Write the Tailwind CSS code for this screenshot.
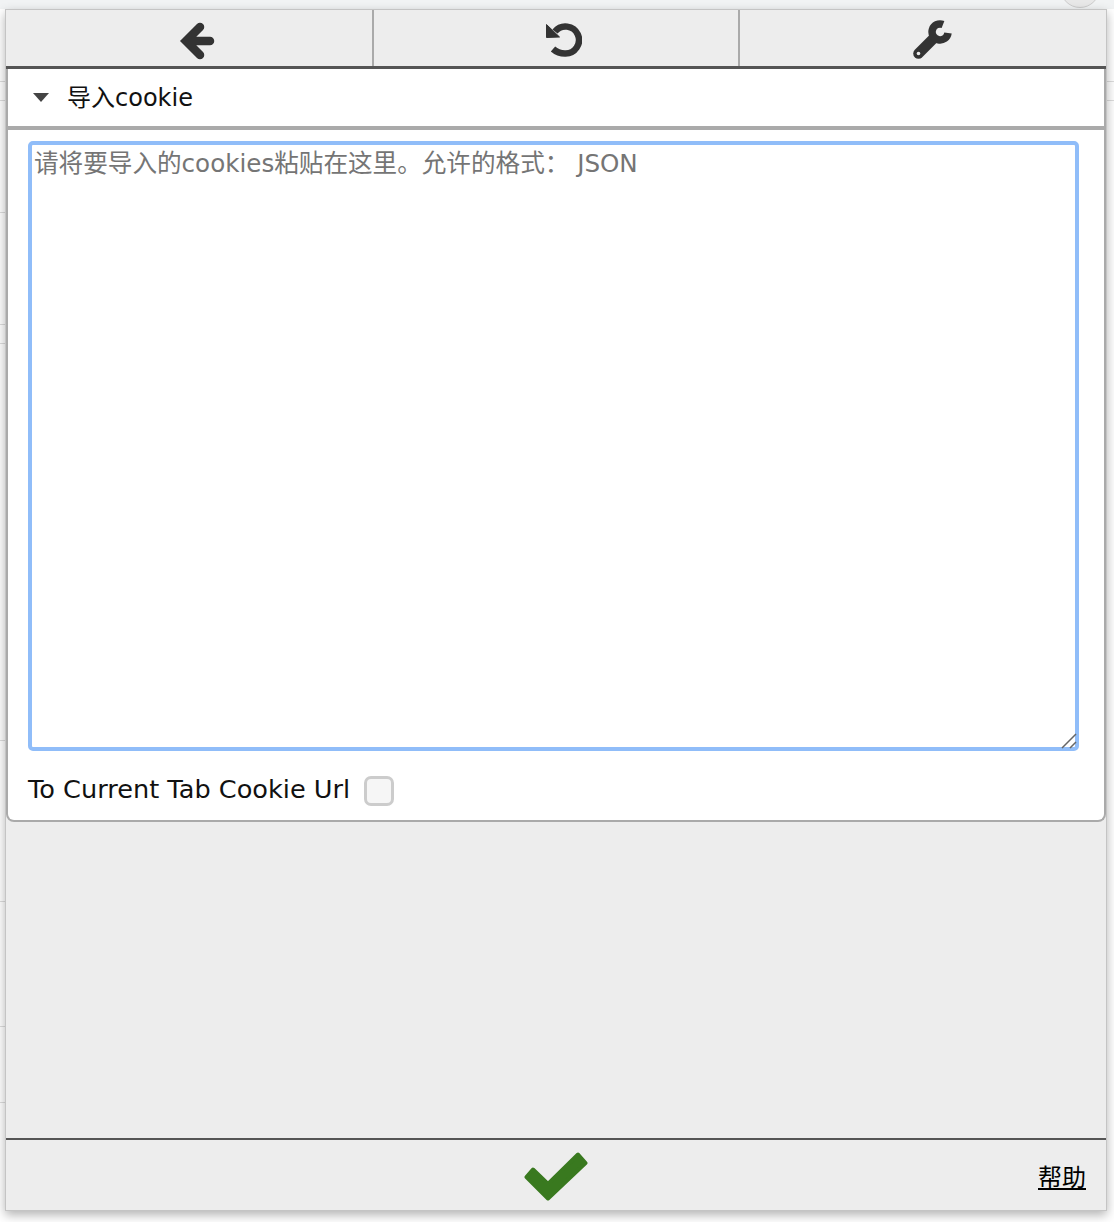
<!DOCTYPE html>
<html lang="zh-CN">
<head>
    <meta charset="UTF-8">
    <title>导入cookie</title>
    <script src="https://cdn.jsdelivr.net/npm/@tailwindcss/browser@4"></script>
</head>
<body class="bg-white font-['DejaVu_Sans','Noto_Sans_CJK_SC',sans-serif]">
    <div class="relative h-[1222px] w-[1114px] overflow-hidden">
        <!-- page behind the popup -->
        <div class="absolute left-0 top-0 h-[9px] w-[1114px] bg-[#f1f3f4]"></div>
        <div class="absolute left-[1060px] top-[-32px] h-[40px] w-[40px] rounded-full border border-[#ccc] bg-[#e8e8e8]"></div>
        <div class="absolute left-0 top-[81px] h-px w-[6px] bg-[#ddd]"></div>
        <div class="absolute left-0 top-[100px] h-px w-[6px] bg-[#ddd]"></div>
        <div class="absolute left-0 top-[212px] h-px w-[6px] bg-[#ddd]"></div>
        <div class="absolute left-0 top-[324px] h-px w-[6px] bg-[#ddd]"></div>
        <div class="absolute left-0 top-[343px] h-px w-[6px] bg-[#ddd]"></div>
        <div class="absolute left-0 top-[740px] h-px w-[6px] bg-[#ddd]"></div>
        <div class="absolute left-0 top-[901px] h-px w-[6px] bg-[#ddd]"></div>
        <div class="absolute left-0 top-[1026px] h-px w-[6px] bg-[#ddd]"></div>
        <div class="absolute left-0 top-[1102px] h-px w-[6px] bg-[#ddd]"></div>
        <div class="absolute left-[1107px] top-[81px] h-px w-[7px] bg-[#ddd]"></div>
        <div class="absolute left-[1107px] top-[100px] h-px w-[7px] bg-[#ddd]"></div>

        <!-- popup -->
        <div class="absolute left-[5px] top-[9px] flex h-[1202px] w-[1102px] flex-col border border-[#c4c4c4] bg-[#ededed] shadow-[0_4px_10px_rgba(0,0,0,0.3)]">
            <div class="flex h-[59px] shrink-0 border-b-[3px] border-[#555]">
                <div class="flex w-[368px] items-center justify-center border-r-2 border-[#aaa] pl-[16px] pt-[6px]">
                    <svg class="h-[38px] w-[38px]" viewBox="0 0 38 38" fill="none" stroke="#333" stroke-width="8.500" stroke-linecap="round" stroke-linejoin="miter">
                        <path d="M10 19H32M22 5 8 19l14 14"/>
                    </svg>
                </div>
                <div class="flex w-[366px] items-center justify-center border-r-2 border-[#aaa] pl-[14px] pt-[4px]">
                    <svg class="h-[36px] w-[38px]" viewBox="0 0 38 36" fill="none">
                        <path d="M11 9.500A13.500 13.500 0 1 1 21 31.500Q14 31.500 9 27" stroke="#333" stroke-width="6.500"/>
                        <path d="M2.500 2.500V15.500L15.500 15Z" fill="#333" stroke="#333" stroke-width="1" stroke-linejoin="round"/>
                    </svg>
                </div>
                <div class="flex flex-1 items-center justify-center pl-[18px] pt-[6px]">
                    <svg class="h-[42px] w-[42px]" viewBox="0 0 42 42" fill="none" stroke="#333">
                        <path d="M7.500 33.500 22 19" stroke-width="10.500" stroke-linecap="round"/>
                        <path d="M32 4.500A8 8 0 1 0 37 13" stroke-width="7.500"/>
                        <circle cx="7.500" cy="33.500" r="1.800" fill="#ededed" stroke="none"/>
                    </svg>
                </div>
            </div>

            <div class="flex h-[753px] shrink-0 flex-col rounded-b-lg border-x-2 border-b-2 border-[#aaa] bg-white">
                <div class="flex h-[61px] shrink-0 items-center border-b-4 border-[#aaa] pl-[25px] text-[24px] text-[#111]">
                    <svg class="mr-[18px] h-[9px] w-[16px]" viewBox="0 0 16 9" fill="#444"><path d="M0 0h16L8 9Z"/></svg>
                    <span>导入cookie</span>
                </div>
                <div class="flex flex-1 flex-col px-[20px] pt-[11px]">
                    <div class="relative h-[610px] w-[1051px]">
                        <textarea class="block h-[610px] w-[1051px] resize-none rounded-[5px] border-[4px] border-[#90bdf9] px-[2px] py-[4px] text-[24.600px] leading-[30px] outline-none placeholder:text-[#757575]" placeholder="请将要导入的cookies粘贴在这里。允许的格式： JSON"></textarea>
                        <svg class="absolute bottom-[2px] right-[2px] h-[16px] w-[16px]" viewBox="0 0 16 16" stroke="#666" stroke-width="1.500">
                            <path d="M1 15 15 1M9 15l6-6"/>
                        </svg>
                    </div>
                    <div class="mt-[22px] flex items-center text-[25.600px] text-[#111]">
                        <span class="-mt-[3px]">To Current Tab Cookie Url</span>
                        <input type="checkbox" class="ml-[14px] h-[30px] w-[30px] appearance-none rounded-[7px] border-[3px] border-[#ccc] bg-[#f6f6f6]">
                    </div>
                </div>
            </div>

            <div class="flex-1"></div>

            <div class="relative flex h-[72px] shrink-0 items-center justify-center border-t-2 border-[#555]">
                <svg class="h-[52px] w-[68px]" viewBox="0 0 68 52" fill="#39791f" stroke="#39791f" stroke-width="4" stroke-linejoin="round">
                    <path d="M4.500 28 11 20.500 26 35 56 5.500 63.500 14 26 49.500Z"/>
                </svg>
                <a href="#" class="absolute right-[20px] top-[22px] text-[24px] leading-[32px] text-black underline">帮助</a>
            </div>
        </div>
    </div>
</body>
</html>
